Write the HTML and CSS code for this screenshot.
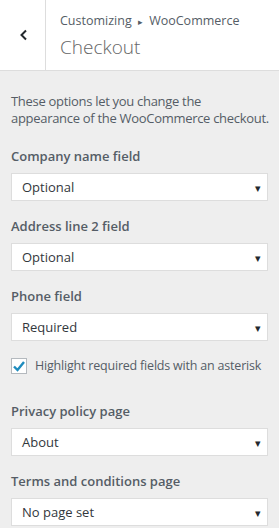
FILE: index.html
```html
<!DOCTYPE html>
<html lang="en">
<head>
    <meta charset="UTF-8">
    <meta name="viewport" content="width=device-width, initial-scale=1.0">
    <title>Checkout</title>
    <link rel="stylesheet" href="styles.css">
</head>
<body>
    <header class="panel-header">
        <button class="back" aria-label="Back">
            <svg width="10" height="12" viewBox="0 0 10 12"><path d="M7 1.5 L2.5 6 L7 10.5" fill="none" stroke="#23282d" stroke-width="2"/></svg>
        </button>
        <div class="titles">
            <div class="crumb">Customizing <span class="sep">&#9656;</span> WooCommerce</div>
            <h1>Checkout</h1>
        </div>
    </header>
    <main class="panel">
        <p class="desc">These options let you change the<br>appearance of the WooCommerce checkout.</p>

        <div class="control">
            <label>Company name field</label>
            <div class="select">Optional<span class="caret">&#9662;</span></div>
        </div>
        <div class="control">
            <label>Address line 2 field</label>
            <div class="select">Optional<span class="caret">&#9662;</span></div>
        </div>
        <div class="control">
            <label>Phone field</label>
            <div class="select">Required<span class="caret">&#9662;</span></div>
        </div>
        <div class="check">
            <span class="box">
                <svg width="14" height="12" viewBox="0 0 14 12"><path d="M2 6.5 L5.5 10 L12 2" fill="none" stroke="#1e8cbe" stroke-width="2.4"/></svg>
            </span>
            Highlight required fields with an asterisk
        </div>
        <div class="control">
            <label>Privacy policy page</label>
            <div class="select">About<span class="caret">&#9662;</span></div>
        </div>
        <div class="control">
            <label>Terms and conditions page</label>
            <div class="select">No page set<span class="caret">&#9662;</span></div>
        </div>
    </main>
</body>
</html>
```
FILE: styles.css
```css
body {
    margin: 0;
    font-family: "Open Sans", "Noto Sans", sans-serif;
    background-color: #eeeeee;
    color: #555d66;
}
.panel-header {
    display: flex;
    height: 70px;
    background-color: #fff;
    border-bottom: 1px solid #ddd;
}
.back {
    width: 46px;
    border: none;
    border-right: 1px solid #ddd;
    background: #fff;
    padding: 0 0 0 2px;
    display: flex;
    align-items: center;
    justify-content: center;
}
.titles {
    padding: 12px 0 0 14px;
}
.crumb {
    font-size: 12.5px;
    color: #555d66;
}
.sep {
    font-size: 9px;
    margin: 0 3px;
}
h1 {
    margin: 5px 0 0;
    font-size: 19px;
    font-weight: 300;
    color: #666;
}
.panel {
    padding: 22px 11px 0 11px;
}
.desc {
    margin: 0 0 20px;
    font-size: 13px;
    line-height: 17px;
    letter-spacing: -0.3px;
    white-space: nowrap;
}
.control {
    margin-bottom: 16px;
}
.control label {
    display: block;
    font-size: 13px;
    font-weight: 600;
    line-height: 18px;
    margin-bottom: 8px;
}
.select {
    display: flex;
    justify-content: space-between;
    align-items: center;
    height: 26px;
    border: 1px solid #ddd;
    background-color: #fff;
    padding: 0 6px 0 10px;
    font-size: 13px;
    color: #32373c;
}
.caret {
    font-size: 11px;
    color: #23282d;
}
.check {
    display: flex;
    align-items: center;
    gap: 8px;
    font-size: 12.5px;
    letter-spacing: -0.2px;
    line-height: 18px;
    white-space: nowrap;
    margin: 3px 0 27px;
}
.box {
    width: 14px;
    height: 14px;
    border: 1px solid #b4b9be;
    background-color: #fff;
    display: flex;
    align-items: center;
    justify-content: center;
}
```
